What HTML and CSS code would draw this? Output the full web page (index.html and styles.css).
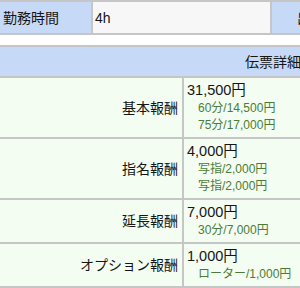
FILE: index.html
```html
<!DOCTYPE html>
<html lang="ja">
<head>
<meta charset="utf-8">
<link rel="stylesheet" href="styles.css">
</head>
<body>
<table class="grid top">
  <colgroup><col class="c1"><col class="c2"><col class="c3"></colgroup>
  <tr>
    <th class="head-cell">勤務時間</th>
    <td class="plain-cell">4h</td>
    <th class="head-cell clipped">出勤</th>
  </tr>
</table>
<table class="grid slip">
  <colgroup><col class="s1"><col class="s2"></colgroup>
  <tr><th class="head-cell title" colspan="2">伝票詳細</th></tr>
  <tr>
    <th class="label">基本報酬</th>
    <td class="value"><div class="main">31,500円</div><div class="sub">60分/14,500円</div><div class="sub">75分/17,000円</div></td>
  </tr>
  <tr>
    <th class="label">指名報酬</th>
    <td class="value"><div class="main">4,000円</div><div class="sub">写指/2,000円</div><div class="sub">写指/2,000円</div></td>
  </tr>
  <tr>
    <th class="label">延長報酬</th>
    <td class="value"><div class="main">7,000円</div><div class="sub">30分/7,000円</div></td>
  </tr>
  <tr>
    <th class="label">オプション報酬</th>
    <td class="value"><div class="main">1,000円</div><div class="sub">ローター/1,000円</div></td>
  </tr>
</table>
</body>
</html>
```
FILE: styles.css
```css
html, body {
  margin: 0;
  padding: 0;
  background: #ffffff;
  overflow: hidden;
}
body {
  font-family: "Liberation Sans", "Noto Sans CJK JP", sans-serif;
  font-size: 14px;
  color: #151515;
}
.grid {
  border-collapse: separate;
  border-spacing: 2px;
  background: #c6c6c6;
  table-layout: fixed;
  margin-left: -2px;
}
.grid th, .grid td {
  box-sizing: border-box;
  font-weight: normal;
  line-height: 20px;
  white-space: nowrap;
  overflow: hidden;
}
.top {
  width: 376px;
}
.c1 { width: 91px; }
.c2 { width: 177px; }
.c3 { width: 100px; }
.head-cell {
  background: #c6daf7;
  text-align: left;
  padding: 6px 3px 5px;
}
.plain-cell {
  background: #f7f7f7;
  padding: 6px 2px 5px;
}
.clipped {
  padding-left: 25px;
}
.slip {
  width: 550px;
  margin-top: 10px;
}
.s1 { width: 182px; }
.s2 { width: 362px; }
.title {
  text-align: center;
  padding: 5px 0 4px;
}
.label {
  background: #f4fdf1;
  text-align: right;
  vertical-align: middle;
  padding: 0 4px 0 0;
}
.value {
  background: #f4fdf1;
  vertical-align: top;
  padding: 2px 3px 3px;
}
.main {
  font-size: 14.5px;
  line-height: 20px;
}
.sub {
  font-size: 12px;
  line-height: 17px;
  color: #4b7c37;
  padding-left: 11px;
}
```
